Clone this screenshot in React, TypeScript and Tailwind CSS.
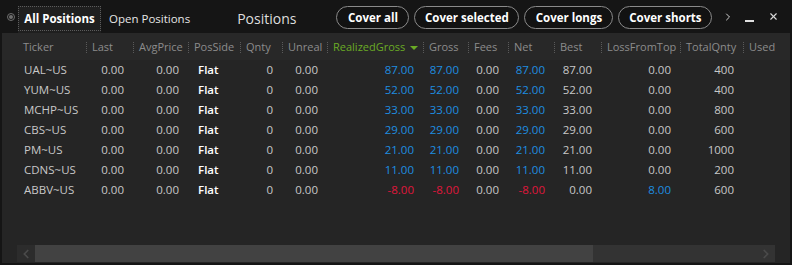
import { ChevronLeft, ChevronRight, X } from 'lucide-react';

type Tone = 'n' | 'b' | 'r';

interface Row {
  ticker: string;
  realized: [string, Tone];
  gross: [string, Tone];
  net: [string, Tone];
  best: string;
  loss: [string, Tone];
  total: string;
}

const rows: Row[] = [
  { ticker: 'UAL~US', realized: ['87.00', 'b'], gross: ['87.00', 'b'], net: ['87.00', 'b'], best: '87.00', loss: ['0.00', 'n'], total: '400' },
  { ticker: 'YUM~US', realized: ['52.00', 'b'], gross: ['52.00', 'b'], net: ['52.00', 'b'], best: '52.00', loss: ['0.00', 'n'], total: '400' },
  { ticker: 'MCHP~US', realized: ['33.00', 'b'], gross: ['33.00', 'b'], net: ['33.00', 'b'], best: '33.00', loss: ['0.00', 'n'], total: '800' },
  { ticker: 'CBS~US', realized: ['29.00', 'b'], gross: ['29.00', 'b'], net: ['29.00', 'b'], best: '29.00', loss: ['0.00', 'n'], total: '600' },
  { ticker: 'PM~US', realized: ['21.00', 'b'], gross: ['21.00', 'b'], net: ['21.00', 'b'], best: '21.00', loss: ['0.00', 'n'], total: '1000' },
  { ticker: 'CDNS~US', realized: ['11.00', 'b'], gross: ['11.00', 'b'], net: ['11.00', 'b'], best: '11.00', loss: ['0.00', 'n'], total: '200' },
  { ticker: 'ABBV~US', realized: ['-8.00', 'r'], gross: ['-8.00', 'r'], net: ['-8.00', 'r'], best: '0.00', loss: ['8.00', 'b'], total: '600' },
];

// grid template shared by the header and the rows
const cols = 'grid grid-cols-[84px_47px_55px_52px_42px_45px_96px_45px_40px_46px_47px_79px_63px_1fr]';

const toneClass: Record<Tone, string> = {
  n: 'text-[#c8c8c8]',
  b: 'text-[#1e8ee0]',
  r: 'text-[#e0163c]',
};

function HeadCell({ label, first = false, sorted = false }: { label: string; first?: boolean; sorted?: boolean }) {
  return (
    <div className="flex items-center h-full">
      {!first && <span className="h-[11px] border-l border-dotted border-[#5a5a5a]" />}
      <span className={`flex items-center ${first ? 'pl-[21px]' : 'pl-[5px]'} ${sorted ? 'text-[#6aab25]' : 'text-[#8c8c8c]'}`}>
        {label}
        {sorted && <span className="ml-[5px] mt-[1px] border-x-[4px] border-t-[4px] border-x-transparent border-t-[#6aab25]" />}
      </span>
    </div>
  );
}

function Num({ v, tone = 'n' }: { v: string; tone?: Tone }) {
  return <div className={`text-right pr-[9px] ${toneClass[tone]}`}>{v}</div>;
}

function CoverButton({ label, w }: { label: string; w: string }) {
  return (
    <button className={`${w} h-[23px] rounded-full border border-[#8a8a8a] bg-[#121212] text-white font-bold text-[11.5px] leading-none`}>
      {label}
    </button>
  );
}

export default function App() {
  return (
    <div className="w-[792px] h-[265px] bg-[#151515] flex flex-col font-['Open_Sans','Noto_Sans',sans-serif] text-[11.5px] select-none overflow-hidden">
      {/* title bar */}
      <div className="h-[33px] flex items-end shrink-0">
        <div className="self-center ml-[7px] w-[8px] h-[8px] rounded-full border border-[#6f6f6f] flex items-center justify-center">
          <span className="w-[4px] h-[4px] rounded-full bg-[#6f6f6f]" />
        </div>
        <div className="ml-[3px] w-[83px] h-[27px] bg-[#1f1f1f] flex items-start">
          <div className="w-full h-[25px] border border-dotted border-[#5c5c5c] flex items-center justify-center text-white font-bold text-[11.5px]">
            All Positions
          </div>
        </div>
        <div className="ml-[8px] h-[27px] flex items-center pb-[2px] text-[#e6e6e6] text-[11.5px]">Open Positions</div>
        <div className="ml-[47px] h-[27px] flex items-center pb-[3px] text-[#dedede] text-[14px]">Positions</div>
        <div className="ml-[40px] self-start mt-[6px] flex gap-[5px]">
          <CoverButton label="Cover all" w="w-[73px]" />
          <CoverButton label="Cover selected" w="w-[105px]" />
          <CoverButton label="Cover longs" w="w-[89px]" />
          <CoverButton label="Cover shorts" w="w-[94px]" />
        </div>
        <div className="self-start mt-[11px] ml-[10px] flex items-center text-[#d0d0d0]">
          <ChevronRight size={12} strokeWidth={2} />
          <span className="ml-[11px] mt-[8px] w-[9px] h-[2px] bg-[#e0e0e0]" />
          <X size={11} strokeWidth={2.5} className="ml-[14px] -mt-[1px] text-[#d8d8d8]" />
        </div>
      </div>

      {/* panel */}
      <div className="flex-1 mx-[2px] mb-[2px] bg-[#252525] flex flex-col">
        <div className={`${cols} h-[27px] bg-[#282828] pt-[2px] text-[11px]`}>
          <HeadCell label="Ticker" first />
          <HeadCell label="Last" />
          <HeadCell label="AvgPrice" />
          <HeadCell label="PosSide" />
          <HeadCell label="Qnty" />
          <HeadCell label="Unreal" />
          <HeadCell label="RealizedGross" sorted />
          <HeadCell label="Gross" />
          <HeadCell label="Fees" />
          <HeadCell label="Net" />
          <HeadCell label="Best" />
          <HeadCell label="LossFromTop" />
          <HeadCell label="TotalQnty" />
          <HeadCell label="Used" />
        </div>

        <div className="flex-1">
          {rows.map((r) => (
            <div key={r.ticker} className={`${cols} h-[20px] items-center`}>
              <div className="pl-[22px] text-[#c8c8c8]">{r.ticker}</div>
              <Num v="0.00" />
              <Num v="0.00" />
              <div className="pl-[10px] text-white font-semibold">Flat</div>
              <Num v="0" />
              <Num v="0.00" />
              <Num v={r.realized[0]} tone={r.realized[1]} />
              <Num v={r.gross[0]} tone={r.gross[1]} />
              <Num v="0.00" />
              <Num v={r.net[0]} tone={r.net[1]} />
              <Num v={r.best} />
              <Num v={r.loss[0]} tone={r.loss[1]} />
              <Num v={r.total} />
              <div />
            </div>
          ))}
        </div>

        {/* horizontal scrollbar */}
        <div className="ml-[15px] w-[758px] h-[17px] mb-[1px] flex bg-[#333333]">
          <div className="w-[18px] bg-[#2c2c2c] flex items-center justify-center text-[#4a4a4a]">
            <ChevronLeft size={14} strokeWidth={3} />
          </div>
          <div className="w-[558px] bg-[#424242]" />
          <div className="flex-1" />
          <div className="w-[18px] flex items-center justify-center text-[#4a4a4a]">
            <ChevronRight size={14} strokeWidth={3} />
          </div>
        </div>
      </div>
    </div>
  );
}
